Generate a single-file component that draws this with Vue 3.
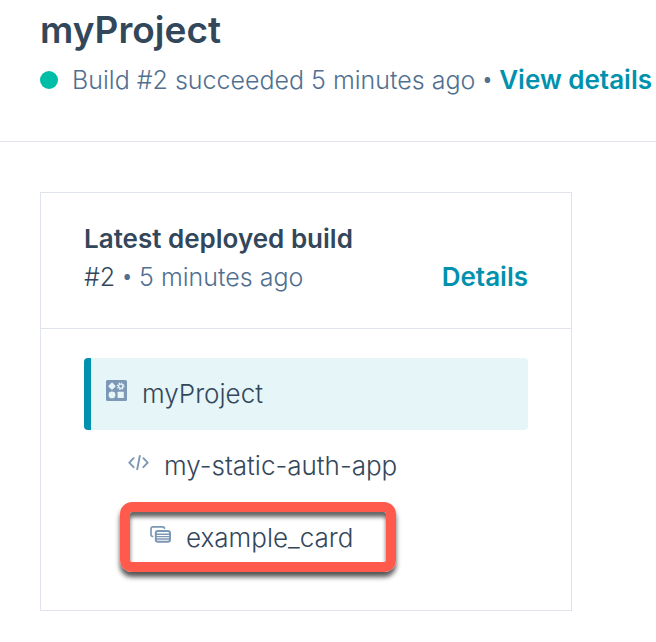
<script setup>
const project = 'myProject'
const nodes = [
  { name: 'myProject', icon: 'project', level: 0 },
  { name: 'my-static-auth-app', icon: 'code', level: 1 },
  { name: 'example_card', icon: 'card', level: 2, marked: true },
]
</script>

<template>
  <div class="page">
    <header class="page-header">
      <h1>{{ project }}</h1>
      <p class="status">
        <span class="dot"></span>
        <span>Build #2 succeeded 5 minutes ago <span class="sep">•</span> <a href="#build">View details</a></span>
      </p>
    </header>

    <main>
      <section class="card">
        <div class="card-header">
          <h2>Latest deployed build</h2>
          <div class="card-meta">
            <span><span class="build">#2</span> <span class="sep">•</span> 5 minutes ago</span>
            <a href="#details">Details</a>
          </div>
        </div>
        <ul class="tree">
          <li
            v-for="node in nodes"
            :key="node.name"
            class="node"
            :class="['level-' + node.level, { marked: node.marked }]"
          >
            <svg v-if="node.icon === 'project'" class="icon" viewBox="0 0 21 21">
              <rect width="21" height="21" rx="1.5" fill="#7c98b6" />
              <path d="M6 3.4 8.8 6.2 6 9 3.2 6.2Z" fill="#e5f5f8" stroke="#e5f5f8" stroke-width="1.6" stroke-linejoin="round" />
              <circle cx="14.7" cy="6.2" r="2.1" fill="none" stroke="#e5f5f8" stroke-width="1.3" />
              <circle cx="14.7" cy="6.2" r="3.2" fill="none" stroke="#e5f5f8" stroke-width="1.3" stroke-dasharray="1.26 1.26" />
              <circle cx="6" cy="14.9" r="3.4" fill="#e5f5f8" />
              <rect x="11.6" y="11.8" width="6.2" height="6.2" rx=".5" fill="#e5f5f8" />
            </svg>
            <svg v-else-if="node.icon === 'code'" class="icon" viewBox="0 0 21 21" fill="none" stroke="#7c98b6" stroke-width="1.9" stroke-linecap="round" stroke-linejoin="round">
              <path d="M5.6 6.2 1.3 10.7 5.6 15.2M15.4 6.2 19.7 10.7 15.4 15.2M11.8 4 9.2 17.4" />
            </svg>
            <svg v-else class="icon" viewBox="0 0 21 21" fill="none" stroke="#7c98b6" stroke-width="1.7" stroke-linecap="round" stroke-linejoin="round">
              <path d="M2.6 12.4Q1 12.4 1 10.6V4.8Q1 2.8 3 2.8H12.4Q14.4 2.8 14.4 4.2" />
              <rect x="5.8" y="7" width="14.2" height="10.8" rx="2.2" stroke-width="2" />
              <path d="M6 10.2H19.6M6 12.6H19.6M6 15H19.6" stroke-width="1.4" />
            </svg>
            <span>{{ node.name }}</span>
          </li>
        </ul>
      </section>
    </main>
  </div>
</template>

<style>
body {
  margin: 0;
  background: #fff;
}
</style>

<style scoped>
.page {
  font-family: Inter, "Open Sans", sans-serif;
  font-size: 26px;
  font-weight: 300;
  line-height: 38px;
  color: #33475b;
  overflow: hidden;
}
.page-header {
  padding: 8px 0 42px 40px;
  border-bottom: 1px solid #dfe3eb;
}
h1,
h2,
p,
ul {
  margin: 0;
  padding: 0;
}
h1 {
  font-size: 37px;
  font-weight: 600;
  line-height: 44px;
}
h2 {
  font-size: 26px;
  font-weight: 600;
  line-height: 38px;
}
a {
  color: #0091ae;
  font-size: 26px;
  font-weight: 600;
  text-decoration: none;
}
.status {
  display: flex;
  align-items: center;
  gap: 14px;
  padding-top: 9px;
  font-size: 25px;
  color: #516f90;
  white-space: nowrap;
}
.dot {
  flex: none;
  width: 18px;
  height: 18px;
  border-radius: 50%;
  background: #00bda5;
}
.sep {
  font-family: "Open Sans", sans-serif;
  font-size: 26px;
  font-weight: 400;
  line-height: 26px;
}
main {
  padding: 50px 84px 31px 40px;
}
.card {
  border: 1px solid #dfe3eb;
}
.card-header {
  padding: 27px 43px 32px;
  border-bottom: 1px solid #dfe3eb;
}
.card-meta {
  display: flex;
  justify-content: space-between;
  font-size: 25px;
  color: #516f90;
}
.build {
  color: #33475b;
}
.tree {
  padding: 29px 43px 36px;
  list-style: none;
}
.node {
  position: relative;
  display: flex;
  align-items: center;
  gap: 15px;
  height: 72px;
  box-sizing: border-box;
}
.icon {
  flex: none;
  width: 21px;
  height: 21px;
  margin-bottom: 8px;
}
.level-0 {
  padding-left: 15px;
  border-left: 7px solid #0091ae;
  border-radius: 4px;
  background: #e5f5f8;
}
.level-1 {
  padding-left: 44px;
}
.level-2 {
  padding-left: 66px;
}
.marked::after {
  content: "";
  position: absolute;
  top: 0;
  left: 36px;
  width: 276px;
  height: 70px;
  box-sizing: border-box;
  border: 10px solid #ff5a4c;
  border-radius: 12px;
  box-shadow: 0 5px 5px #555, inset 0 5px 4px #666;
}
</style>
